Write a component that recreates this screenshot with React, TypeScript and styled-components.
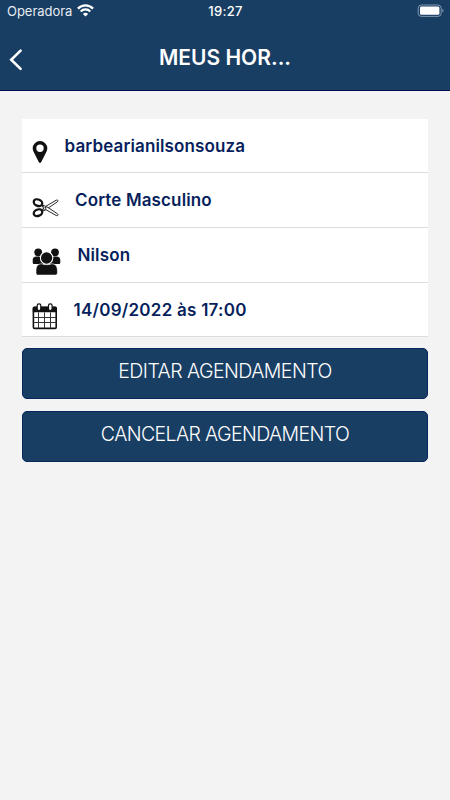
import React from 'react';
import styled, { createGlobalStyle } from 'styled-components';

const GlobalStyle = createGlobalStyle`
  * { box-sizing: border-box; }
  body { margin: 0; background: #f3f3f3; font-family: Inter, "Liberation Sans", sans-serif; }
`;

const Screen = styled.div`
  width: 450px;
  height: 800px;
  display: flex;
  flex-direction: column;
  background: #f3f3f3;
  overflow: hidden;
`;

const Header = styled.header`
  height: 91px;
  background: #193e64;
  border-bottom: 1px solid #06084f;
  color: #fff;
`;

const StatusBar = styled.div`
  display: grid;
  grid-template-columns: 1fr auto 1fr;
  height: 24px;
  padding: 0 6px 0 7px;
  font-size: 13px;
  line-height: 23px;
`;

const Carrier = styled.div`
  display: flex;
  align-items: flex-start;
  gap: 5px;
  color: #e6ebf1;
  letter-spacing: -0.03px;
  svg { margin-top: 4px; }
`;

const Clock = styled.div`
  font-weight: 500;
  letter-spacing: 0.3px;
`;

const BatterySlot = styled.div`
  display: flex;
  justify-content: flex-end;
  padding-top: 4px;
`;

const NavBar = styled.div`
  display: grid;
  grid-template-columns: 40px 1fr 40px;
  height: 66px;
  padding-top: 17px;
`;

const BackButton = styled.button`
  border: 0;
  padding: 7px 0 0 8px;
  background: none;
  display: flex;
  align-items: flex-start;
`;

const Title = styled.h1`
  margin: 0;
  text-align: center;
  font-size: 21px;
  line-height: 33px;
  font-weight: 600;
`;

const Content = styled.main`
  display: flex;
  flex-direction: column;
  padding: 28px 22px 0;
`;

const Details = styled.section`
  display: grid;
  grid-template-rows: 54px 55px 55px 54px;
  margin-bottom: 11px;
`;

const DetailRow = styled.div<{ $gap: number }>`
  display: flex;
  gap: ${p => p.$gap}px;
  padding-left: 10px;
  background: #fff;
  border-bottom: 1px solid #dcdcdc;
  svg { flex: none; }
`;

const DetailText = styled.span<{ $spacing: number }>`
  font-size: 17px;
  line-height: 54px;
  height: 53px;
  font-weight: 600;
  color: #071f5c;
  letter-spacing: ${p => p.$spacing}px;
  white-space: nowrap;
`;

const ActionButton = styled.button<{ $spacing: number }>`
  display: block;
  height: 51px;
  margin: 0 0 12px;
  padding: 0 0 5px;
  border: 1px solid #07265b;
  border-radius: 5px;
  background: #193e64;
  color: #fff;
  font-family: inherit;
  font-size: 19.5px;
  line-height: 44px;
  font-weight: 350;
  letter-spacing: ${p => p.$spacing}px;
  white-space: nowrap;
`;

const WifiIcon = () => (
  <svg width="17" height="13" viewBox="0 0 17 13" fill="none" stroke="#fff">
    <path d="M.9 4.6C5.2.3 11.8.3 16.1 4.6" strokeWidth="2.3" />
    <path d="M3.7 7.4c2.7-2.7 6.9-2.7 9.6 0" strokeWidth="2.1" />
    <path d="M8.5 12.6 5.9 9.9c1.5-1.4 3.7-1.4 5.2 0z" fill="#fff" stroke="none" />
  </svg>
);

const BatteryIcon = () => (
  <svg width="27" height="14" viewBox="0 0 27 14">
    <rect x="1.2" y="1" width="23" height="11.4" rx="3.2" fill="#193e64" stroke="#8297ad" />
    <rect x="3" y="2.6" width="19.4" height="8.2" rx="1.4" fill="#fff" />
    <path d="M25.4 4.8c1.6.6 1.6 3.2 0 3.8z" fill="#8297ad" />
  </svg>
);

const BackIcon = () => (
  <svg width="16" height="24" viewBox="0 0 16 24" fill="none" stroke="#fff" strokeWidth="2.6" strokeLinecap="round" strokeLinejoin="miter">
    <path d="M12.6 2.6 3.2 11.7l9.4 9.2" />
  </svg>
);

const PinIcon = () => (
  <svg width="16" height="53" viewBox="0 0 16 53">
    <path fillRule="evenodd" fill="#111" d="M8 22a7.3 7.3 0 0 0-7.3 7.3c0 2.2 1 3.9 2 5.7l4.2 8.2c.5 1 1.7 1 2.2 0l4.2-8.2c1-1.8 2-3.5 2-5.7A7.3 7.3 0 0 0 8 22zm0 3.5a3.7 3.7 0 1 1 0 7.4 3.7 3.7 0 0 1 0-7.4z" />
  </svg>
);

const ScissorsIcon = () => (
  <svg width="28" height="54" viewBox="0 0 28 54" fill="none" stroke="#111">
    <ellipse cx="6" cy="29.7" rx="4.4" ry="3.2" transform="rotate(22 6 29.7)" strokeWidth="2.3" />
    <ellipse cx="6" cy="39.7" rx="4.4" ry="3.2" transform="rotate(-22 6 39.7)" strokeWidth="2.3" />
    <path d="M10 31.8 13 33.8 24 27.3c1.4-.8 2.7.2 1.5 1.4l-11.7 8-3.8 1.7 1.4-3.3z" fill="#fff" strokeWidth=".9" />
    <path d="m10 31.9 2.1 3-2.1 2.6 3.8-.9 10.2 5.8c1.4.8 2.8-.3 1.6-1.5L14.7 33.7z" fill="#fff" strokeWidth=".9" />
    <circle cx="13.7" cy="34.9" r=".8" fill="#111" stroke="none" />
  </svg>
);

const PeopleIcon = () => (
  <svg width="29" height="54" viewBox="0 0 29 54" fill="#111">
    <circle cx="6.2" cy="24.3" r="3.9" />
    <circle cx="23" cy="24.3" r="3.9" />
    <path d="M.7 34.2v-2c0-2.4 1.4-3.7 3.8-3.7h2c2.4 0 4 .8 4.6 2.2v5.4H2.4c-1.2 0-1.7-.7-1.7-1.9zM28.3 34.2v-2c0-2.4-1.4-3.7-3.8-3.7h-2c-2.4 0-4 .8-4.6 2.2v5.4h8.7c1.2 0 1.7-.7 1.7-1.9z" />
    <circle cx="14.6" cy="30" r="6.2" stroke="#fff" strokeWidth="1.1" />
    <path d="M4 44.8v-2.2c0-4.4 2-6.8 5.7-6.8 3.2 1.2 6.8 1.2 10 0 3.7 0 5.7 2.4 5.7 6.8v2.2c0 1.6-.8 2.3-2.3 2.3H6.3C4.8 47.1 4 46.4 4 44.8z" stroke="#fff" strokeWidth=".6" />
  </svg>
);

const CalendarIcon = () => (
  <svg width="26" height="53" viewBox="0 0 26 53">
    <rect x="1.4" y="24.4" width="22.8" height="21" rx="1.2" fill="#fff" stroke="#111" strokeWidth="1.6" />
    <path d="M.8 29.3v-4.1c0-1 .6-1.5 1.5-1.5h21c.9 0 1.5.5 1.5 1.5v4.1z" fill="#111" />
    <path d="M6.5 29.4v15.8M12.5 29.4v15.8M18.5 29.4v15.8M1.3 34.5h23M1.3 39.5h23" stroke="#333" strokeWidth="1" />
    <rect x="5.2" y="20.9" width="3.6" height="6.6" rx="1.7" fill="#fff" stroke="#111" strokeWidth="1.2" />
    <rect x="16.5" y="20.9" width="3.6" height="6.6" rx="1.7" fill="#fff" stroke="#111" strokeWidth="1.2" />
  </svg>
);

const details = [
  { label: 'barbearianilsonsouza', icon: <PinIcon />, gap: 16.5, spacing: 0.13 },
  { label: 'Corte Masculino', icon: <ScissorsIcon />, gap: 15, spacing: 0.13 },
  { label: 'Nilson', icon: <PeopleIcon />, gap: 16.5, spacing: 0.13 },
  { label: '14/09/2022 às 17:00', icon: <CalendarIcon />, gap: 15.5, spacing: 0.25 },
];

export default function App() {
  return (
    <Screen>
      <GlobalStyle />
      <Header>
        <StatusBar>
          <Carrier>Operadora<WifiIcon /></Carrier>
          <Clock>19:27</Clock>
          <BatterySlot><BatteryIcon /></BatterySlot>
        </StatusBar>
        <NavBar>
          <BackButton aria-label="Voltar"><BackIcon /></BackButton>
          <Title>MEUS HOR...</Title>
        </NavBar>
      </Header>
      <Content>
        <Details>
          {details.map(d => (
            <DetailRow key={d.label} $gap={d.gap}>
              {d.icon}
              <DetailText $spacing={d.spacing}>{d.label}</DetailText>
            </DetailRow>
          ))}
        </Details>
        <ActionButton $spacing={-0.54}>EDITAR AGENDAMENTO</ActionButton>
        <ActionButton $spacing={-0.6}>CANCELAR AGENDAMENTO</ActionButton>
      </Content>
    </Screen>
  );
}
